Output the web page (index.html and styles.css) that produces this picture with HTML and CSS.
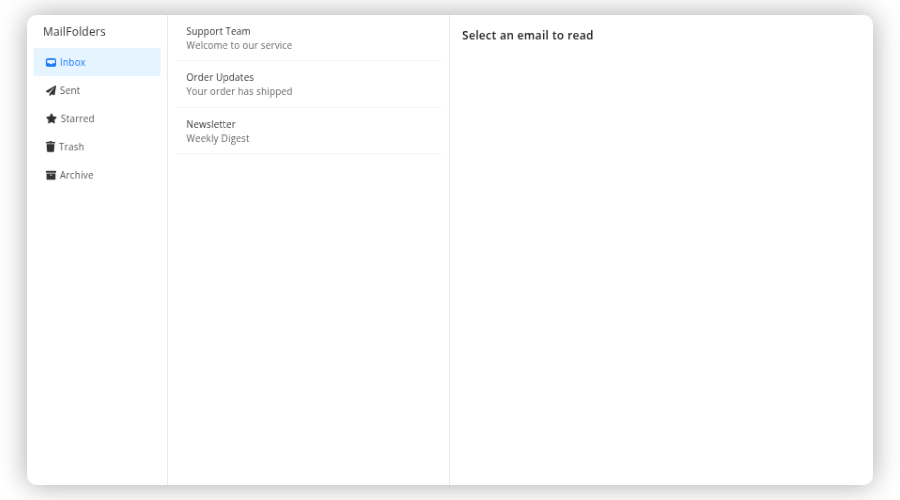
FILE: index.html
```html
<!DOCTYPE html>
<html lang="en">
<head>
    <meta charset="UTF-8">
    <title>MailFolders</title>
    <link rel="stylesheet" href="styles.css">
</head>
<body>
    <div class="mailApp">
        <div class="folderPanel">
            <h2>MailFolders</h2>
            <ul class="folderList">
                <li class="folder active">
                    <svg class="icon" viewBox="0 0 512 512" width="11" height="11"><path d="M96 48h320c53 0 96 43 96 96v224c0 53-43 96-96 96H96c-53 0-96-43-96-96V144c0-53 43-96 96-96zm-16 80c-9 0-16 7-16 16v152h104c10 0 18 6 22 14l14 26h112l14-26c4-8 12-14 22-14h104V144c0-9-7-16-16-16z"/></svg>
                    Inbox
                </li>
                <li class="folder">
                    <svg class="icon" viewBox="0 0 512 512" width="11" height="11"><path d="M476 3.200L12.500 270.600c-18.100 10.400-15.800 35.600 2.200 43.200L121 358.400l287.300-253.200c5.500-4.900 13.300 2.600 8.600 8.300L176 407v80.500c0 23.600 28.500 32.900 42.500 15.800L282 426l124.600 52.200c14.200 6 30.400-2.900 33-18.200l72-432C515 7.800 493.300-6.800 476 3.200z"/></svg>
                    Sent
                </li>
                <li class="folder">
                    <svg class="icon" viewBox="0 0 576 512" width="12" height="12"><path d="M259.300 17.800L194 150.200 47.900 171.500c-26.200 3.800-36.700 36.100-17.700 54.600l105.700 103-25 145.500c-4.500 26.300 23.200 46 46.400 33.700L288 439.600l130.700 68.700c23.200 12.200 50.900-7.400 46.400-33.700l-25-145.500 105.700-103c19-18.500 8.500-50.800-17.700-54.600L382 150.200 316.700 17.800c-11.700-23.600-45.600-23.900-57.400 0z"/></svg>
                    Starred
                </li>
                <li class="folder">
                    <svg class="icon" viewBox="0 0 448 512" width="10" height="12"><path d="M432 32H312l-9.400-18.700A24 24 0 0 0 281.100 0H166.800a23.700 23.700 0 0 0-21.400 13.300L136 32H16A16 16 0 0 0 0 48v32a16 16 0 0 0 16 16h416a16 16 0 0 0 16-16V48a16 16 0 0 0-16-16zM53.200 467a48 48 0 0 0 47.900 45h245.800a48 48 0 0 0 47.900-45L416 128H32z"/></svg>
                    Trash
                </li>
                <li class="folder">
                    <svg class="icon" viewBox="0 0 512 512" width="11" height="11"><path d="M32 448c0 17.700 14.300 32 32 32h384c17.700 0 32-14.300 32-32V160H32v288zm160-212c0-6.600 5.400-12 12-12h104c6.600 0 12 5.400 12 12v8c0 6.600-5.400 12-12 12H204c-6.600 0-12-5.400-12-12v-8zM480 32H32C14.300 32 0 46.300 0 64v48c0 8.800 7.200 16 16 16h480c8.800 0 16-7.200 16-16V64c0-17.700-14.300-32-32-32z"/></svg>
                    Archive
                </li>
            </ul>
        </div>
        <div class="messagePanel">
            <div class="message">
                <div class="sender">Support Team</div>
                <div class="subject">Welcome to our service</div>
            </div>
            <div class="message">
                <div class="sender">Order Updates</div>
                <div class="subject">Your order has shipped</div>
            </div>
            <div class="message">
                <div class="sender">Newsletter</div>
                <div class="subject">Weekly Digest</div>
            </div>
        </div>
        <div class="readPanel">
            <h3>Select an email to read</h3>
        </div>
    </div>
</body>
</html>
```

FILE: styles.css
```css
* {
  box-sizing: border-box;
  list-style: none;
  margin: 0;
  padding: 0;
}

body {
  background-color: #FFFFFF;
  font-family: "Open Sans", sans-serif;
  font-size: 10px;
  letter-spacing: 0.2px;
  color: #333333;
  overflow: hidden;
}

/* the whole app window is drawn a little smaller than the viewport */
.mailApp {
  width: 900px;
  height: 500px;
  display: flex;
  background-color: #FFFFFF;
  border-radius: 10px;
  box-shadow: 0 0 30px rgba(0, 0, 0, 0.35);
  overflow: hidden;
  transform: scale(0.94);
  will-change: transform;
}

.folderPanel {
  width: 150px;
  padding: 0 7px;
  border-right: 1px solid #E8E8E8;
}

.folderPanel h2 {
  font-size: 12px;
  font-weight: 400;
  line-height: 18px;
  margin: 9px 0 8px 10px;
}

.folder {
  height: 30px;
  display: flex;
  align-items: center;
  gap: 4px;
  padding-left: 13px;
  color: #555555;
}

.folder .icon {
  fill: #333333;
}

.folder.active {
  background-color: #E6F4FF;
  color: #1677FF;
}

.folder.active .icon {
  fill: #1677FF;
}

.messagePanel {
  width: 300px;
  padding: 0 8px;
  border-right: 1px solid #E8E8E8;
}

.message {
  padding: 10px 11.5px 8.3px;
  border-bottom: 1px solid #F3F3F3;
  line-height: 15px;
}

.subject {
  color: #666666;
  letter-spacing: 0.17px;
}

.readPanel {
  flex: 1;
  padding: 13px 13px;
}

.readPanel h3 {
  font-size: 12px;
  letter-spacing: 0.33px;
  font-weight: 600;
  line-height: 18px;
  color: #222222;
}
```
